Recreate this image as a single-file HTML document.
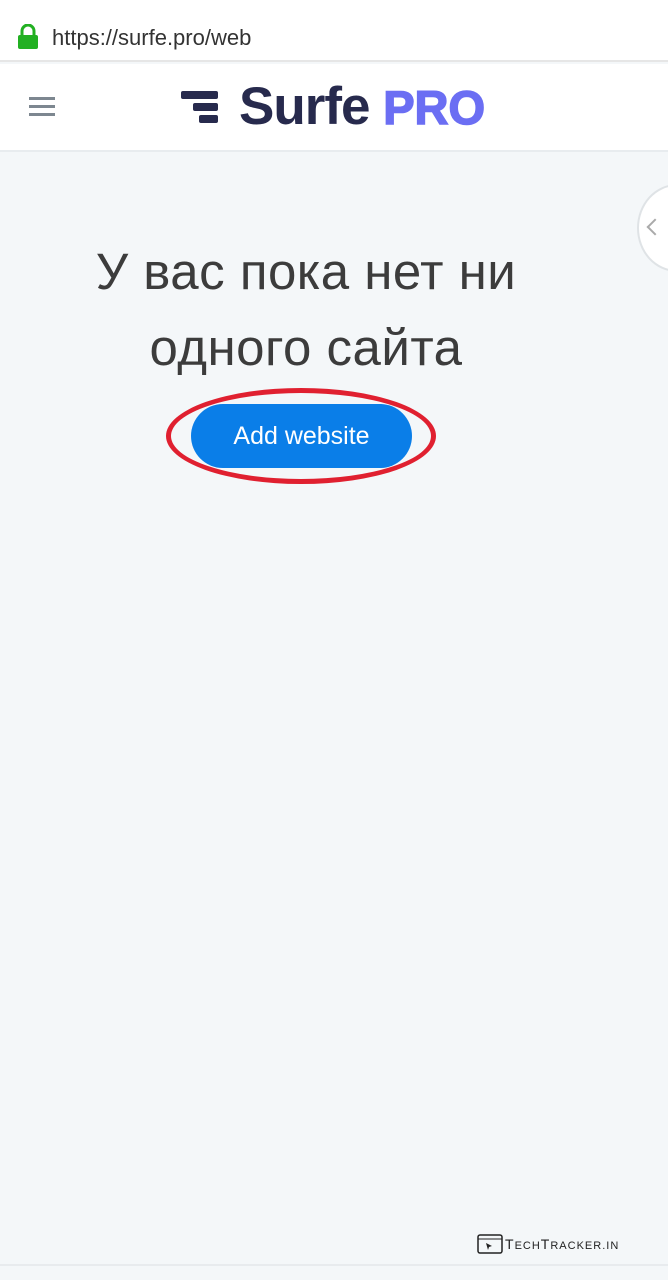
<!DOCTYPE html>
<html><head><meta charset="utf-8"><style>
*{margin:0;padding:0;box-sizing:border-box}
body{width:668px;height:1280px;background:#f4f7f9;font-family:"Liberation Sans",sans-serif;position:relative;overflow:hidden}
.url{position:absolute;top:0;left:0;width:668px;height:62px;background:#fff;border-bottom:2px solid #e6e6e6}
.url span{position:absolute;left:52px;top:25px;font-size:22px;color:#333}
.nav{position:absolute;top:64px;left:0;width:668px;height:88px;background:#fff;border-bottom:2px solid #e8ecef}
.t1{position:absolute;left:0;width:668px;text-align:center;font-size:51px;color:#3c3c3c;letter-spacing:0.5px}
.btn{position:absolute;left:191px;top:404px;width:221px;height:64px;border-radius:32px;background:#0a7ee8;color:#fff;font-size:25px;text-align:center;line-height:64px}
</style></head><body>
<div class="url">
<svg style="position:absolute;left:17px;top:24px" width="22" height="26"><path d="M5 11V7a6 6 0 0 1 12 0v4" stroke="#22b022" stroke-width="3" fill="none"/><rect x="1" y="11" width="20" height="14" rx="2" fill="#22b022"/></svg>
<span>https://surfe.pro/web</span></div>
<div class="nav">
<div style="position:absolute;left:29px;top:33px;width:26px;height:3px;background:#7d8790;box-shadow:0 8px 0 #7d8790,0 16px 0 #7d8790"></div>
<svg style="position:absolute;left:180px;top:24px" width="40" height="40"><rect x="1" y="3" width="37" height="8" rx="2" fill="#272a4d"/><rect x="13" y="15" width="25" height="8" rx="2" fill="#272a4d"/><rect x="19" y="27" width="19" height="8" rx="2" fill="#272a4d"/></svg>
<div style="position:absolute;left:239px;top:12px;font-size:53px;font-weight:bold;color:#272a4d;letter-spacing:-1px;white-space:nowrap">Surfe <span style="color:#6b6ef3;font-size:47px;font-weight:900;letter-spacing:0px;-webkit-text-stroke:1.5px #6b6ef3">PRO</span></div>
</div>
<div style="position:absolute;left:637px;top:184px;width:80px;height:88px;border-radius:50%;border:2px solid #dfe3e6;background:#fff"></div>
<div style="position:absolute;left:649px;top:221px;width:12px;height:12px;border-left:2px solid #aaa;border-bottom:2px solid #aaa;transform:rotate(45deg)"></div>
<div class="t1" style="top:242px;left:-28px">У вас пока нет ни</div>
<div class="t1" style="top:318px;left:-28px">одного сайта</div>
<div style="position:absolute;left:166px;top:388px;width:270px;height:96px;border:5px solid #e02030;border-radius:50%"></div>
<div class="btn">Add website</div>
<svg style="position:absolute;left:477px;top:1234px" width="26" height="20"><rect x="1" y="1" width="24" height="18" rx="2" fill="none" stroke="#222" stroke-width="1.5"/><line x1="1" y1="5" x2="25" y2="5" stroke="#222"/><path d="M9 9l6 3-3 1-1 3z" fill="#222"/></svg>
<div style="position:absolute;left:505px;top:1236px;font-size:14px;color:#222;letter-spacing:1px">T<span style="font-size:11px">ECH</span>T<span style="font-size:11px">RACKER.IN</span></div>
<div style="position:absolute;left:0;top:1264px;width:668px;height:2px;background:#e8ebee"></div>
</body></html>
